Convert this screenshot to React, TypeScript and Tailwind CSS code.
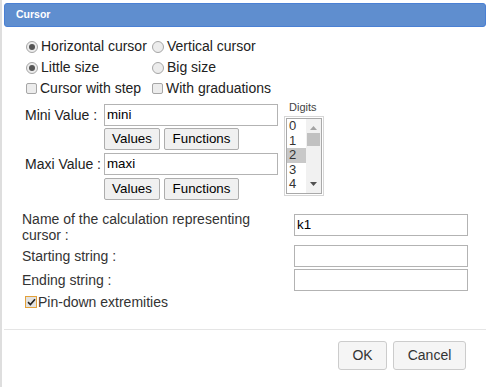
import React from 'react';

function Radio({ checked }: { checked?: boolean }) {
  return (
    <span className="w-[12px] h-[12px] rounded-full border border-[#a6a6a6] bg-[#ececec] flex items-center justify-center shrink-0">
      {checked && <span className="w-[6px] h-[6px] rounded-full bg-[#555]" />}
    </span>
  );
}

function Box() {
  return <span className="w-[11px] h-[11px] rounded-[2px] border border-[#a6a6a6] bg-[#ececec] shrink-0" />;
}

function Option({ kind, checked, label }: { kind: 'radio' | 'box'; checked?: boolean; label: string }) {
  return (
    <div className="flex items-center gap-[3px] h-[21px]">
      {kind === 'radio' ? <Radio checked={checked} /> : <Box />}
      <span>{label}</span>
    </div>
  );
}

function Btn({ children, w }: { children: React.ReactNode; w: string }) {
  return (
    <button
      type="button"
      className={`${w} h-[22px] rounded-[2px] border border-[#adadad] bg-[#f0f0f0] text-[13.33px] text-black leading-none`}
    >
      {children}
    </button>
  );
}

function TextBox({ value, className = '' }: { value?: string; className?: string }) {
  return (
    <div className={`w-[174px] h-[22px] border border-[#b3b3b3] bg-white flex items-center pl-[2px] text-[13.33px] text-black ${className}`}>
      {value}
    </div>
  );
}

export default function App() {
  const digits = ['0', '1', '2', '3', '4'];

  return (
    <div className="w-[488px] h-[387px] bg-white border-l-2 border-[#dedede] text-[14px] text-[#222] font-['Liberation_Sans',Arial,sans-serif] overflow-hidden">
      {/* Title bar */}
      <div className="mt-[3px] ml-[2px] mr-[2px] h-[24px] rounded-[3px] bg-[#5f8ecf] border border-[#4a80d4] flex items-center pl-[11px] text-white font-bold text-[10.5px]">
        Cursor
      </div>

      {/* Options */}
      <div className="mt-[9px] pl-[24px] grid grid-cols-[126px_auto]">
        <Option kind="radio" checked label="Horizontal cursor" />
        <Option kind="radio" label="Vertical cursor" />
        <Option kind="radio" checked label="Little size" />
        <Option kind="radio" label="Big size" />
        <Option kind="box" label="Cursor with step" />
        <Option kind="box" label="With graduations" />
      </div>

      {/* Mini / Maxi values */}
      <div className="mt-[2px] pl-[23px] flex items-start">
        <div className="mt-[3px] grid grid-cols-[79px_174px]">
          <div className="h-[22px] flex items-center">Mini Value :</div>
          <TextBox value="mini" />
          <div />
          <div className="mt-[2px] flex gap-[4px]">
            <Btn w="w-[56px]">Values</Btn>
            <Btn w="w-[75px]">Functions</Btn>
          </div>
          <div className="mt-[3px] h-[22px] flex items-center">Maxi Value :</div>
          <TextBox value="maxi" className="mt-[3px]" />
          <div />
          <div className="mt-[3px] flex gap-[4px]">
            <Btn w="w-[56px]">Values</Btn>
            <Btn w="w-[75px]">Functions</Btn>
          </div>
        </div>

        <div className="ml-[6px] flex flex-col">
          <div className="pl-[5px] text-[11px] leading-[13px] text-[#444]">Digits</div>
          <div className="mt-[2px] w-[40px] h-[80px] border border-[#d6d6d6] p-[1px]">
            <div className="h-full border border-[#a9a9a9] flex overflow-hidden bg-white">
              <div className="w-[19px] flex flex-col text-[13px] leading-[14.5px] text-[#333]">
                {digits.map((d) => (
                  <div key={d} className={`pl-[2px] ${d === '2' ? 'bg-[#c8c8c8]' : ''}`}>
                    {d}
                  </div>
                ))}
              </div>
              <div className="w-[15px] bg-[#f1f1f1] flex flex-col items-center">
                <svg width="7" height="4" viewBox="0 0 7 4" className="mt-[7px]">
                  <path d="M0 4 L3.5 0 L7 4 Z" fill="#a3a3a3" />
                </svg>
                <div className="mt-[3px] w-[13px] h-[13px] bg-[#c1c1c1]" />
                <div className="flex-1" />
                <svg width="7" height="4" viewBox="0 0 7 4" className="mb-[7px]">
                  <path d="M0 0 L7 0 L3.5 4 Z" fill="#505050" />
                </svg>
              </div>
            </div>
          </div>
        </div>
      </div>

      {/* Calculation settings */}
      <div className="mt-[11px] pl-[20px] grid grid-cols-[272px_174px] text-[#333]">
        <div className="max-w-[260px] leading-[16px]">Name of the calculation representing cursor :</div>
        <TextBox value="k1" className="mt-[3px]" />
        <div className="mt-[2px] h-[22px] flex items-center">Starting string :</div>
        <TextBox className="mt-[2px]" />
        <div className="mt-[2px] h-[22px] flex items-center">Ending string :</div>
        <TextBox className="mt-[2px]" />
      </div>

      <div className="mt-[3px] pl-[23px] h-[16px] flex items-center gap-[1px] text-[#333]">
        <span className="w-[12px] h-[12px] border border-[#e3a13a] bg-[#e2e2e2] flex items-center justify-center">
          <svg width="9" height="8" viewBox="0 0 9 8">
            <path d="M1 4.2 L3.4 6.5 L8 1.2" stroke="#222" strokeWidth="1.6" fill="none" />
          </svg>
        </span>
        <span>Pin-down extremities</span>
      </div>

      {/* Footer */}
      <div className="mt-[19px] mx-[2px] h-px bg-[#e5e5e5]" />
      <div className="mt-[11px] pr-[22px] flex justify-end gap-[6px]">
        <button type="button" className="w-[49px] h-[29px] rounded-[3px] border border-[#cccccc] bg-[#f5f5f5] text-[14px] text-[#333]">
          OK
        </button>
        <button type="button" className="w-[73px] h-[29px] rounded-[3px] border border-[#cccccc] bg-[#f5f5f5] text-[14px] text-[#333]">
          Cancel
        </button>
      </div>
    </div>
  );
}
